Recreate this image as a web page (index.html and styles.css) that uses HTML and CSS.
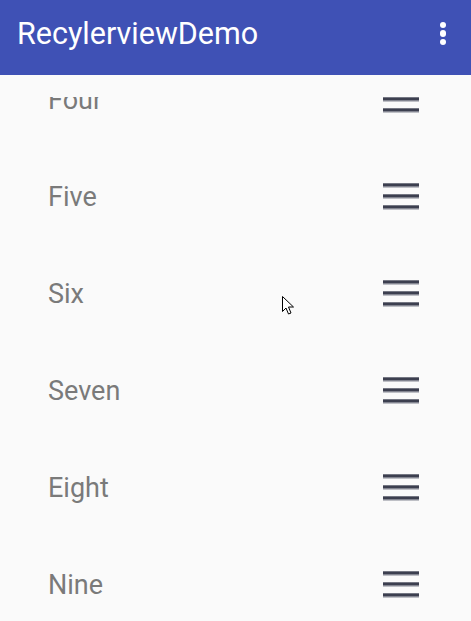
FILE: index.html
```html
<!DOCTYPE html>
<html>
<head>
<meta charset="utf-8">
<link rel="stylesheet" href="styles.css">
</head>
<body>
<div class="app">
  <header class="appbar">
    <div class="title">RecylerviewDemo</div>
    <div class="overflow"><span></span><span></span><span></span></div>
  </header>
  <div class="list">
    <div class="clip">
      <div class="row"><span class="label">Four</span><span class="handle"><i></i><i></i><i></i></span></div>
    </div>
    <div class="row"><span class="label">Five</span><span class="handle"><i></i><i></i><i></i></span></div>
    <div class="row"><span class="label">Six</span><span class="handle"><i></i><i></i><i></i></span></div>
    <div class="row"><span class="label">Seven</span><span class="handle"><i></i><i></i><i></i></span></div>
    <div class="row"><span class="label">Eight</span><span class="handle"><i></i><i></i><i></i></span></div>
    <div class="row"><span class="label">Nine</span><span class="handle"><i></i><i></i><i></i></span></div>
  </div>
  <svg class="cursor" width="14" height="20" viewBox="0 0 14 20"><path d="M0.5 0.5 L0.5 15.5 L4 12 L6.5 18 L9 17 L6.5 11 L11.5 11 Z" fill="#fff" stroke="#000" stroke-width="1" stroke-linejoin="miter"/></svg>
</div>
</body>
</html>
```
FILE: styles.css
```css
html, body {
  margin: 0;
  padding: 0;
  background: #fafafa;
}
.app {
  position: relative;
  width: 471px;
  height: 621px;
  overflow: hidden;
  font-family: Roboto, "Noto Sans", sans-serif;
}
.appbar {
  height: 75px;
  background: #3f51b5;
  display: flex;
  align-items: center;
  justify-content: space-between;
  padding: 0 25px 0 17px;
  box-sizing: border-box;
}
.title {
  color: #fff;
  font-size: 30.5px;
  line-height: 1;
  margin-top: -7px;
}
.overflow {
  display: flex;
  flex-direction: column;
  gap: 1.8px;
  margin-top: -8px;
}
.overflow span {
  width: 6.5px;
  height: 6.5px;
  border-radius: 50%;
  background: #fff;
}
.list {
  display: flex;
  flex-direction: column;
}
.clip {
  margin-top: 22px;
  height: 51px;
  overflow: hidden;
  display: flex;
  flex-direction: column;
  justify-content: flex-end;
}
.row {
  flex: none;
  height: 97px;
  display: flex;
  align-items: center;
  justify-content: space-between;
  padding: 0 52px 0 48px;
  box-sizing: border-box;
}
.label {
  font-size: 27px;
  color: #7a7a7a;
  margin-top: 1px;
}
.handle {
  width: 36px;
  height: 27px;
  display: flex;
  flex-direction: column;
  justify-content: space-between;
  margin-top: -1px;
}
.handle i {
  display: block;
  height: 5px;
  background: linear-gradient(#9a9ca5 0%, #3c3f4f 25%, #3c3f4f 50%, #8a8c97 72%, #dcdde0 100%);
}
.cursor {
  position: absolute;
  left: 282px;
  top: 296px;
}
```
